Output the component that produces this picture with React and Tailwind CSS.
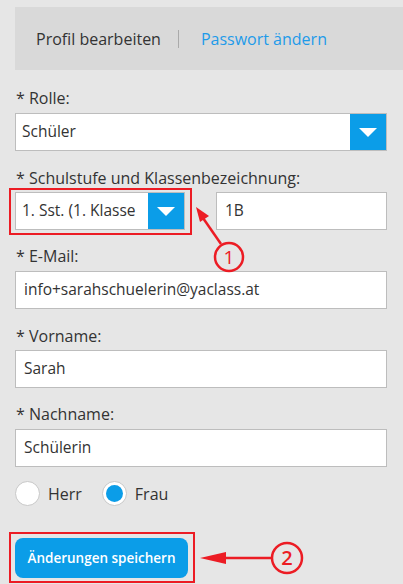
import React from 'react';

const font = { fontFamily: '"Open Sans", "Noto Sans", sans-serif' };

function Caret() {
    return (
        <svg width="18" height="9" viewBox="0 0 18 9">
            <path d="M0 0 L18 0 L9 9 Z" fill="#fff" />
        </svg>
    );
}

function Label({ children, className = '' }) {
    return <div className={`h-5 pl-px text-[16px] leading-5 text-[#333] ${className}`}>{children}</div>;
}

function TextInput({ value, className = '' }) {
    return (
        <div className={`flex h-[38px] items-center border border-[#bdbdbd] bg-white pl-[8px] text-[15.5px] text-[#333] ${className}`}>
            {value}
        </div>
    );
}

function Select({ value, className = '' }) {
    return (
        <div className={`flex h-[38px] items-stretch border border-[#bdbdbd] bg-white text-[15.5px] text-[#333] ${className}`}>
            <div className="flex flex-1 items-center overflow-hidden whitespace-nowrap pl-[6px]">{value}</div>
            <div className="flex w-[36px] items-center justify-center bg-[#0b9de8]">
                <Caret />
            </div>
        </div>
    );
}

function Radio({ checked, label }) {
    return (
        <div className="flex items-center gap-[8px]">
            <div className="flex h-[25px] w-[25px] items-center justify-center rounded-full border border-[#c8c8c8] bg-white">
                {checked && <div className="h-[17px] w-[17px] rounded-full bg-[#0b9de8]" />}
            </div>
            <span className="text-[16px] text-[#333]">{label}</span>
        </div>
    );
}

export default function App() {
    return (
        <div className="relative h-[584px] w-[403px] overflow-hidden bg-[#e6e6e6]" style={font}>
            <div className="ml-[15px] mt-[7px] flex h-[63px] items-center bg-[#d9d9d9] pl-[21px] text-[16px]">
                <span className="text-[#333]">Profil bearbeiten</span>
                <span className="ml-[17px] mr-[22px] h-[18px] w-px bg-[#aaa]" />
                <span className="text-[#1e9be9]">Passwort ändern</span>
            </div>

            <div className="flex flex-col pl-[15px] pr-[16px]">
                <Label className="mt-[18px]">* Rolle:</Label>
                <Select value="Schüler" className="mt-[5px] h-[37px]" />

                <Label className="mt-[17px]">* Schulstufe und Klassenbezeichnung:</Label>
                <div className="mt-[4px] flex gap-[31px]">
                    <div className="relative w-[170px]">
                        <Select value="1. Sst. (1. Klasse" />
                        <div className="absolute -left-[6px] -top-[4px] h-[47px] w-[183px] border-[2.5px] border-[#ec1c24]" />
                    </div>
                    <TextInput value="1B" className="flex-1" />
                </div>

                <Label className="mt-[16px]">* E-Mail:</Label>
                <TextInput value="info+sarahschuelerin@yaclass.at" className="mt-[5px]" />

                <Label className="mt-[17px]">* Vorname:</Label>
                <TextInput value="Sarah" className="mt-[4px]" />

                <Label className="mt-[16px]">* Nachname:</Label>
                <TextInput value="Schülerin" className="mt-[5px]" />

                <div className="mt-[14px] flex gap-[20px]">
                    <Radio label="Herr" />
                    <Radio checked label="Frau" />
                </div>

                <div className="mt-[32px] flex">
                    <div className="relative">
                        <button className="h-[40px] w-[173px] rounded-[8px] bg-[#0b9de8] text-[13.5px] font-semibold text-white">
                            Änderungen speichern
                        </button>
                        <div className="absolute -left-[6px] -top-[6px] h-[51px] w-[186px] border-[2.5px] border-[#ec1c24]" />
                    </div>
                </div>
            </div>

            <svg className="pointer-events-none absolute left-0 top-0" width="403" height="584">
                <line x1="221" y1="244" x2="203" y2="218" stroke="#ec1c24" strokeWidth="2.5" />
                <path d="M196 207 L209 216 L200 222 Z" fill="#ec1c24" />
                <circle cx="229" cy="257" r="14" fill="none" stroke="#ec1c24" strokeWidth="2.5" />
                <text x="229" y="264" textAnchor="middle" fill="#ec1c24" fontSize="19" fontFamily="Open Sans, sans-serif">1</text>

                <line x1="272" y1="558" x2="214" y2="558" stroke="#ec1c24" strokeWidth="2.5" />
                <path d="M200 558 L226 552 L226 564 Z" fill="#ec1c24" />
                <circle cx="287" cy="558" r="15" fill="none" stroke="#ec1c24" strokeWidth="2.5" />
                <text x="287" y="565" textAnchor="middle" fill="#ec1c24" fontSize="20" fontWeight="600" fontFamily="Open Sans, sans-serif">2</text>
            </svg>
        </div>
    );
}
